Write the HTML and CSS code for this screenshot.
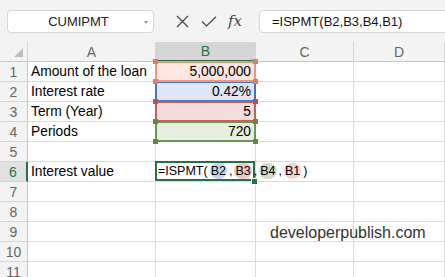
FILE: index.html
```html
<!DOCTYPE html>
<html lang="en">
<head>
  <meta charset="UTF-8" />
  <title>ISPMT</title>
  <link rel="stylesheet" href="styles.css">
</head>
<body>
  <div class="toolbar">
    <div class="namebox">CUMIPMT<span class="caret"></span></div>
    <div class="bar-icons">
      <svg class="ico" width="13" height="13" viewBox="0 0 13 13">
        <path d="M1 1 L12 12 M12 1 L1 12" stroke="#444" stroke-width="1.2" fill="none" />
      </svg>
      <svg class="ico" width="16" height="11" viewBox="0 0 16 11">
        <path d="M1 5.5 L5.5 10 L15 0.8" stroke="#444" stroke-width="1.2" fill="none" />
      </svg>
      <span class="fx">fx</span>
    </div>
    <div class="formula">=ISPMT(B2,B3,B4,B1)</div>
  </div>

  <div class="sheet">
    <div class="hd corner"><span class="tri"></span></div>
    <div class="hd col">A</div>
    <div class="hd col sel">B</div>
    <div class="hd col">C</div>
    <div class="hd col">D</div>

    <div class="rn">1</div>
    <div class="c">Amount of the loan</div>
    <div class="c num ref ref-b1">5,000,000</div>
    <div class="c"></div>
    <div class="c"></div>

    <div class="rn">2</div>
    <div class="c">Interest rate</div>
    <div class="c num ref ref-b2">0.42%</div>
    <div class="c"></div>
    <div class="c"></div>

    <div class="rn">3</div>
    <div class="c">Term (Year)</div>
    <div class="c num ref ref-b3">5</div>
    <div class="c"></div>
    <div class="c"></div>

    <div class="rn">4</div>
    <div class="c">Periods</div>
    <div class="c num ref ref-b4">720</div>
    <div class="c"></div>
    <div class="c"></div>

    <div class="rn">5</div>
    <div class="c"></div>
    <div class="c"></div>
    <div class="c"></div>
    <div class="c"></div>

    <div class="rn active">6</div>
    <div class="c">Interest value</div>
    <div class="c editing">=ISPMT(<span class="pill p-b2">B2</span>,<span class="pill p-b3">B3</span>,<span class="pill p-b4">B4</span>,<span class="pill p-b1">B1</span>)<span class="cursor"></span></div>
    <div class="c"></div>
    <div class="c"></div>

    <div class="rn">7</div>
    <div class="c"></div>
    <div class="c"></div>
    <div class="c"></div>
    <div class="c"></div>

    <div class="rn">8</div>
    <div class="c"></div>
    <div class="c"></div>
    <div class="c wm-cell"><span class="watermark">developerpublish.com</span></div>
    <div class="c"></div>

    <div class="rn">9</div>
    <div class="c"></div>
    <div class="c"></div>
    <div class="c"></div>
    <div class="c"></div>

    <div class="rn">10</div>
    <div class="c"></div>
    <div class="c"></div>
    <div class="c"></div>
    <div class="c"></div>

    <div class="rn">11</div>
    <div class="c"></div>
    <div class="c"></div>
    <div class="c"></div>
    <div class="c"></div>
  </div>
</body>
</html>
```

FILE: styles.css
```css
* {
  box-sizing: border-box;
}

body {
  margin: 0;
  font-family: "Liberation Sans", Arial, sans-serif;
  background: #fff;
  overflow: hidden;
}

.toolbar {
  display: flex;
  align-items: center;
  height: 42px;
  padding: 0 0 0 7px;
  background: #f3f3f3;
}

.namebox {
  position: relative;
  width: 147px;
  height: 23px;
  background: #fff;
  border: 1px solid #d6d6d6;
  border-radius: 4px;
  display: flex;
  align-items: center;
  justify-content: center;
  font-size: 13px;
  color: #222;
  padding-right: 4px;
}

.caret {
  position: absolute;
  right: 5px;
  top: 10px;
  width: 0;
  height: 0;
  border-left: 2.5px solid transparent;
  border-right: 2.5px solid transparent;
  border-top: 3px solid #999;
}

.bar-icons {
  display: flex;
  align-items: center;
  gap: 12px;
  margin-left: 22px;
  width: 83px;
}

.fx {
  font-family: "DejaVu Serif", "Liberation Serif", serif;
  font-style: italic;
  font-size: 15px;
  color: #444;
  margin-left: -1px;
}

.formula {
  flex: 1;
  height: 23px;
  margin-right: -6px;
  background: #fff;
  border: 1px solid #d6d6d6;
  border-radius: 4px;
  display: flex;
  align-items: center;
  padding-left: 12px;
  font-size: 13px;
  color: #111;
}

.sheet {
  display: grid;
  grid-template-columns: 28px 128px 100px 98px 1fr;
  grid-template-rows: 20px repeat(11, 20px);
}

.hd {
  background: #f3f3f3;
  border-right: 1px solid #d4d4d4;
  border-bottom: 1px solid #c8c8c8;
  color: #666;
  font-size: 14px;
  display: flex;
  align-items: center;
  justify-content: center;
}

.hd.sel {
  background: #d6d6d6;
  color: #217346;
  border-bottom: 2px solid #217346;
}

.corner {
  justify-content: flex-end;
  align-items: flex-end;
  padding: 0 4px 4px 0;
}

.tri {
  width: 0;
  height: 0;
  border-left: 9px solid transparent;
  border-bottom: 9px solid #bdbdbd;
}

.rn {
  background: #f3f3f3;
  border-right: 1px solid #c8c8c8;
  border-bottom: 1px solid #d4d4d4;
  color: #666;
  font-size: 14px;
  display: flex;
  align-items: center;
  justify-content: center;
}

.rn.active {
  background: #e1e1e1;
  color: #217346;
  border-right: 2px solid #217346;
}

.c {
  border-right: 1px solid #dadada;
  border-bottom: 1px solid #dadada;
  font-size: 13.8px;
  color: #000;
  padding: 0 3px;
  display: flex;
  align-items: center;
  white-space: nowrap;
}

.num {
  justify-content: flex-end;
  padding-right: 4px;
}

.ref {
  position: relative;
}

.ref::before {
  content: "";
  position: absolute;
  top: -1px;
  left: -1px;
  right: -1px;
  bottom: -1px;
  border: 2px solid var(--line);
}

.ref::after {
  content: "";
  position: absolute;
  top: -3px;
  left: -3px;
  right: -3px;
  bottom: -3px;
  background:
    linear-gradient(var(--dot), var(--dot)) left top / 5px 5px no-repeat,
    linear-gradient(var(--dot), var(--dot)) right top / 5px 5px no-repeat,
    linear-gradient(var(--dot), var(--dot)) left bottom / 5px 5px no-repeat,
    linear-gradient(var(--dot), var(--dot)) right bottom / 5px 5px no-repeat;
}

.ref-b1 {
  --line: #e59a86;
  --dot: #e07d65;
  background: #fbe6e1;
  z-index: 4;
}

.ref-b2 {
  --line: #4f70c2;
  --dot: #4f70c2;
  background: #dfe6f6;
  z-index: 1;
}

.ref-b3 {
  --line: #c65e5b;
  --dot: #c0504d;
  background: #f4dddd;
  z-index: 2;
}

.ref-b4 {
  --line: #6b9550;
  --dot: #5e8a45;
  background: #e6eedf;
  z-index: 3;
}

.editing {
  position: relative;
  z-index: 5;
  overflow: visible;
  padding-left: 3px;
  font-size: 12.5px;
  margin: -1px 0 0 -1px;
}

.editing::before {
  content: "";
  position: absolute;
  inset: 0;
  border: 2px solid #217346;
  z-index: -1;
}

.editing::after {
  content: "";
  position: absolute;
  right: -3px;
  bottom: -4px;
  width: 5px;
  height: 5px;
  background: #217346;
  border: 1px solid #fff;
}

.pill {
  border-radius: 8px;
  padding: 1px 1px;
  margin: 0 2px;
}

.p-b2 { background: #c9d5ef; }
.p-b3 { background: #ecc9c8; }
.p-b4 { background: #d3dccd; }
.p-b1 { background: #f7d2cd; }

.cursor {
  display: inline-block;
  width: 1px;
  height: 15px;
  background: #000;
  margin-left: 3px;
}

.wm-cell {
  position: relative;
  overflow: visible;
}

.watermark {
  position: absolute;
  left: 14px;
  top: 22px;
  font-size: 16px;
  color: #333;
  z-index: 6;
}
```
